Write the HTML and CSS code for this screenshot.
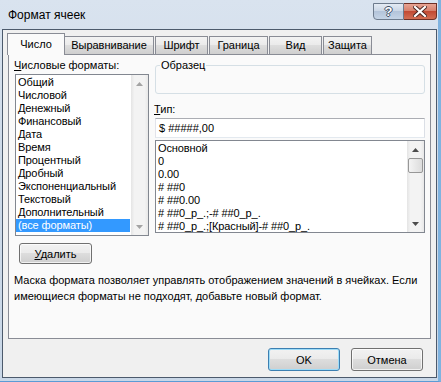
FILE: index.html
```html
<!DOCTYPE html>
<html lang="ru">
<head>
    <meta charset="UTF-8">
    <title>Формат ячеек</title>
    <link rel="stylesheet" href="styles.css">
</head>
<body>
    <div class="window">
        <div class="titlebar">
            <span class="title">Формат ячеек</span>
            <div class="caption-buttons">
                <div class="cap help">?</div>
                <div class="cap close">
                    <svg width="14" height="11" viewBox="0 0 14 11">
                        <path d="M2 1 L12 10 M12 1 L2 10" stroke="#4a2520" stroke-width="4" stroke-linecap="square"/>
                        <path d="M2 1 L12 10 M12 1 L2 10" stroke="#fff" stroke-width="2.2" stroke-linecap="square"/>
                    </svg>
                </div>
            </div>
        </div>

        <div class="client">
            <div class="tabs">
                <div class="tab active">Число</div>
                <div class="tab">Выравнивание</div>
                <div class="tab">Шрифт</div>
                <div class="tab">Граница</div>
                <div class="tab">Вид</div>
                <div class="tab">Защита</div>
            </div>

            <div class="panel">
                <div class="columns">
                    <div class="col-left">
                        <div class="label"><u>Ч</u>исловые форматы:</div>
                        <div class="listbox categories">
                            <ul class="items">
                                <li>Общий</li>
                                <li>Числовой</li>
                                <li>Денежный</li>
                                <li>Финансовый</li>
                                <li>Дата</li>
                                <li>Время</li>
                                <li>Процентный</li>
                                <li>Дробный</li>
                                <li>Экспоненциальный</li>
                                <li>Текстовый</li>
                                <li>Дополнительный</li>
                                <li class="selected">(все форматы)</li>
                            </ul>
                            <div class="scrollbar disabled">
                                <div class="arrow up"><svg width="7" height="4" viewBox="0 0 7 4"><polygon points="0,4 7,4 3.5,0"/></svg></div>
                                <div class="track"></div>
                                <div class="arrow down"><svg width="7" height="4" viewBox="0 0 7 4"><polygon points="0,0 7,0 3.5,4"/></svg></div>
                            </div>
                        </div>
                        <button class="btn delete"><u>У</u>далить</button>
                    </div>

                    <div class="col-right">
                        <div class="sample">
                            <span class="sample-label">Образец</span>
                        </div>
                        <div class="label type-label"><u>Т</u>ип:</div>
                        <div class="textbox">$ #####,00</div>
                        <div class="listbox types">
                            <ul class="items">
                                <li>Основной</li>
                                <li>0</li>
                                <li>0.00</li>
                                <li># ##0</li>
                                <li># ##0.00</li>
                                <li># ##0_р_.;-# ##0_р_.</li>
                                <li># ##0_р_.;[Красный]-# ##0_р_.</li>
                            </ul>
                            <div class="scrollbar">
                                <div class="arrow up"><svg width="7" height="4" viewBox="0 0 7 4"><polygon points="0,4 7,4 3.5,0"/></svg></div>
                                <div class="track">
                                    <div class="thumb"></div>
                                </div>
                                <div class="arrow down"><svg width="7" height="4" viewBox="0 0 7 4"><polygon points="0,0 7,0 3.5,4"/></svg></div>
                            </div>
                        </div>
                    </div>
                </div>

                <p class="hint">Маска формата позволяет управлять отображением значений в ячейках. Если имеющиеся форматы не подходят, добавьте новый формат.</p>
            </div>

            <div class="footer">
                <button class="btn default">OK</button>
                <button class="btn">Отмена</button>
            </div>
        </div>
    </div>
</body>
</html>
```

FILE: styles.css
```css
* {
    margin: 0;
    padding: 0;
    box-sizing: border-box;
}

html, body {
    width: 441px;
    height: 382px;
    overflow: hidden;
}

body {
    font-family: "Liberation Sans", Arial, sans-serif;
    font-size: 11px;
    line-height: 16px;
    color: #000;
}

.window {
    width: 441px;
    height: 382px;
    display: flex;
    flex-direction: column;
    background: linear-gradient(to bottom, #d9e3ef 0%, #cfdbe9 40%, #c9d7e7 100%);
    border-right: 3px solid #7fb3e0;
    border-bottom: 1px solid #5b9bd5;
}

/* title bar */

.titlebar {
    height: 29px;
    display: flex;
    align-items: flex-start;
}

.title {
    padding: 7px 0 0 8px;
    font-size: 12px;
}

.caption-buttons {
    margin: 3px 1px 0 auto;
    display: flex;
}

.cap {
    height: 17px;
    border: 1px solid #6d7b8d;
    display: flex;
    align-items: center;
    justify-content: center;
}

.help {
    width: 31px;
    border-radius: 0 0 0 4px;
    background: linear-gradient(to bottom, #e4ebf4 0%, #cbd7e6 45%, #b3c4da 50%, #c5d4e6 100%);
    color: #fff;
    font-weight: bold;
    font-size: 13px;
    text-shadow: -1px 0 #3c4e66, 1px 0 #3c4e66, 0 -1px #3c4e66, 0 1px #3c4e66;
}

.close {
    width: 33px;
    border-left: none;
    border-color: #6e3026;
    border-radius: 0 0 4px 0;
    background: linear-gradient(to bottom, #e8a493 0%, #d7806c 45%, #c24a33 50%, #d26e54 100%);
}

/* client area */

.client {
    flex-grow: 1;
    margin: 0 1px 3px 2px;
    border: 1px solid #4c5a6c;
    background: #f0f0f0;
    display: flex;
    flex-direction: column;
}

.tabs {
    display: grid;
    grid-template-columns: 56px 91px 54px 60px 54px 50px;
    align-items: end;
    margin: 3px 0 0 5px;
    height: 21px;
    position: relative;
    z-index: 1;
}

.tab {
    height: 18px;
    border: 1px solid #898c95;
    border-bottom: none;
    margin-right: 1px;
    background: linear-gradient(to bottom, #f3f3f3 0%, #ebebeb 45%, #dddddd 50%, #cfcfcf 100%);
    text-align: center;
    line-height: 16px;
}

.tab.active {
    height: 22px;
    margin: 0 -1px -1px -1px;
    background: #fafafa;
    line-height: 20px;
}

.panel {
    width: 423px;
    height: 285px;
    margin-left: 5px;
    border: 1px solid #898c95;
    background: #fafafa;
    padding-top: 2px;
}

.columns {
    display: flex;
    gap: 6px;
    padding-left: 6px;
}

.col-left {
    width: 134px;
}

.col-right {
    width: 270px;
}

.label {
    margin-left: -1px;
    height: 16px;
}

/* list boxes */

.listbox {
    background: #fff;
    border: 1px solid #828790;
    display: flex;
}

.categories {
    height: 162px;
    margin-top: 1px;
}

.types {
    height: 93px;
    margin-top: 2px;
}

.items {
    list-style: none;
    flex-grow: 1;
    padding-top: 1px;
    letter-spacing: -0.1px;
}

.items li {
    height: 13px;
    line-height: 13px;
    padding-left: 2px;
    white-space: nowrap;
}

.items li.selected {
    background: #3399ff;
    color: #fff;
    margin-right: 1px;
}

.scrollbar {
    width: 17px;
    display: flex;
    flex-direction: column;
    background: linear-gradient(to right, #e4e4e4 0%, #f3f3f3 20%, #f3f3f3 80%, #e8e8e8 100%);
}

.arrow {
    height: 17px;
    display: flex;
    align-items: center;
    justify-content: center;
}

.arrow svg {
    fill: #4d4d4d;
}

.scrollbar.disabled .arrow svg {
    fill: #a3a3a3;
}

.track {
    flex-grow: 1;
}

.thumb {
    width: 15px;
    height: 15px;
    margin-left: 1px;
    border: 1px solid #979797;
    border-radius: 2px;
    background: linear-gradient(to right, #f4f4f4 0%, #e8e8e8 50%, #dcdcdc 100%);
}

/* right column */

.sample {
    margin-top: 8px;
    height: 29px;
    border: 1px solid #d5dfe5;
    border-radius: 3px;
}

.sample-label {
    display: inline-block;
    margin: -9px 0 0 4px;
    padding: 0 1px;
    background: #fafafa;
    vertical-align: top;
}

.type-label {
    margin-top: 7px;
}

.textbox {
    height: 20px;
    margin-top: 1px;
    border: 1px solid #abadb3;
    border-color: #abadb3 #dbdfe6 #e3e9ef #e2e3ea;
    background: #fff;
    padding: 1px 0 0 3px;
}

/* buttons */

.btn {
    font-family: inherit;
    font-size: 11px;
    color: #000;
    height: 23px;
    border: 1px solid #707070;
    border-radius: 3px;
    background: linear-gradient(to bottom, #f2f2f2 0%, #ebebeb 45%, #dddddd 50%, #cfcfcf 100%);
    box-shadow: inset 0 0 0 1px rgba(255,255,255,0.7);
}

.btn.delete {
    width: 73px;
    height: 21px;
    margin: 7px 0 0 4px;
}

.btn.default {
    border-color: #3c7fb1;
    box-shadow: inset 0 0 0 1px #9ddcf8;
}

.hint {
    padding: 8px 0 0 5px;
    line-height: 16px;
}

.footer {
    display: flex;
    justify-content: flex-end;
    gap: 11px;
    margin-top: 9px;
    padding-right: 13px;
}

.footer .btn {
    width: 72px;
}
```
